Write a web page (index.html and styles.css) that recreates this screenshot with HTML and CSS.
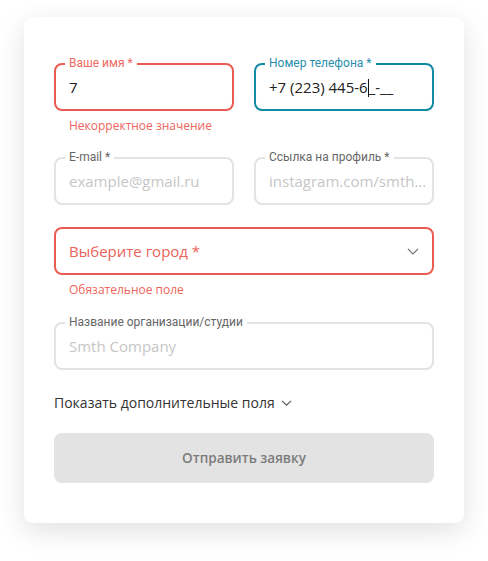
FILE: index.html
```html
<!DOCTYPE html>
<html lang="ru">
<head>
<meta charset="utf-8">
<link rel="stylesheet" href="styles.css">
</head>
<body>
<div class="card">
  <div class="row row-first">
    <div class="group">
      <div class="field field-error">
        <span class="label">Ваше имя *</span>
        <span class="value">7</span>
      </div>
      <div class="error">Некорректное значение</div>
    </div>
    <div class="group">
      <div class="field field-focus">
        <span class="label">Номер телефона *</span>
        <span class="value">+7 (223) 445-6<span class="caret"></span>_-__</span>
      </div>
    </div>
  </div>
  <div class="row row-second">
    <div class="field">
      <span class="label">E-mail *</span>
      <span class="placeholder">example@gmail.ru</span>
    </div>
    <div class="field">
      <span class="label">Ссылка на профиль *</span>
      <span class="placeholder">instagram.com/smth...</span>
    </div>
  </div>
  <div class="group">
    <div class="field field-error select">
      <span class="select-text">Выберите город *</span>
      <svg class="chevron" width="12" height="7" viewBox="0 0 12 7"><path d="M1 1l5 5 5-5" fill="none" stroke="#777" stroke-width="1.2"/></svg>
    </div>
    <div class="error">Обязательное поле</div>
  </div>
  <div class="field org">
    <span class="label">Название организации/студии</span>
    <span class="placeholder">Smth Company</span>
  </div>
  <div class="more">Показать дополнительные поля <svg class="chevron-small" width="11" height="6" viewBox="0 0 11 6"><path d="M1 0.8l4.5 4.4 4.5-4.4" fill="none" stroke="#555" stroke-width="1.1"/></svg></div>
  <button class="submit" type="button">Отправить заявку</button>
</div>
</body>
</html>
```
FILE: styles.css
```css
* { box-sizing: border-box; }
html, body { margin: 0; padding: 0; background: #fff; }
body {
  font-family: "Open Sans", "Liberation Sans", sans-serif;
  width: 488px;
  height: 561px;
  padding: 17px 24px 0;
}
.card {
  width: 440px;
  height: 506px;
  background: #fff;
  border-radius: 9px;
  box-shadow: 0 8px 28px rgba(0, 0, 0, 0.12);
  padding: 46px 30px 0;
  display: flex;
  flex-direction: column;
}
.row {
  display: grid;
  grid-template-columns: 180px 180px;
  column-gap: 20px;
}
.row-first { margin-bottom: 23px; }
.row-second { margin-bottom: 22px; }
.field {
  position: relative;
  height: 48px;
  border: 2px solid #e3e3e3;
  border-radius: 8px;
  display: flex;
  align-items: center;
  padding: 0 13px;
  font-size: 15px;
}
.field-error { border-color: #ea5c52; }
.field-focus { border-color: #128aa6; }
.label {
  position: absolute;
  left: 9px;
  top: -9px;
  padding: 0 4px;
  background: #fff;
  font-family: Roboto, "Liberation Sans", sans-serif;
  font-size: 12px;
  line-height: 14px;
  color: #666;
}
.field-error .label { color: #ee6a60; }
.field-focus .label { color: #2a8eac; }
.value { color: #222; white-space: nowrap; }
.caret {
  display: inline-block;
  width: 1px;
  height: 18px;
  background: #111;
  vertical-align: -4px;
}
.placeholder { color: #c6c6c6; white-space: nowrap; }
.error {
  margin-top: 7px;
  height: 16px;
  line-height: 16px;
  font-size: 12px;
  color: #ee655b;
  padding-left: 15px;
}
.select { justify-content: space-between; padding-right: 13px; }
.select-text { color: #ec6258; }
.group + .org { margin-top: 24px; }
.more {
  margin-top: 23px;
  line-height: 20px;
  font-size: 14px;
  color: #333;
  display: flex;
  align-items: center;
  gap: 6px;
}
.submit {
  margin-top: 20px;
  height: 50px;
  border: none;
  border-radius: 8px;
  background: #e3e3e3;
  color: #7b7b7b;
  font-family: "Open Sans", "Liberation Sans", sans-serif;
  font-weight: 600;
  font-size: 13.5px;
  width: 100%;
}
```
